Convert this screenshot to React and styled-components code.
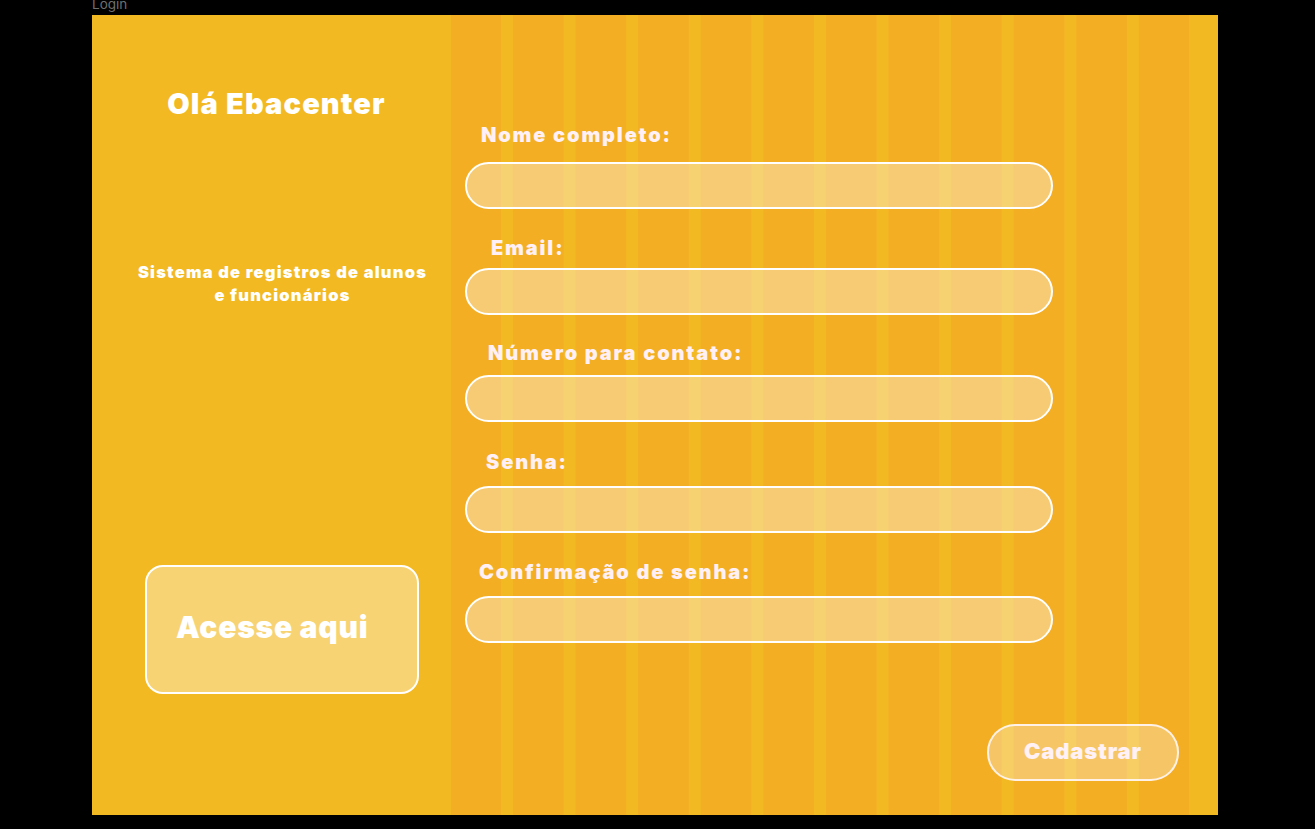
import React from 'react';
import styled, { createGlobalStyle } from 'styled-components';

const GlobalStyle = createGlobalStyle`
	html, body {
		margin: 0;
		padding: 0;
		background: #000000;
	}
	body {
		font-family: Inter, "Noto Sans", sans-serif;
		width: 1315px;
		height: 829px;
		overflow: hidden;
	}
`;

const fields = [
	{ label: 'Nome completo:', indent: 16, top: 108, gap: 15 },
	{ label: 'Email:', indent: 26, top: 27, gap: 8 },
	{ label: 'Número para contato:', indent: 23, top: 26, gap: 10 },
	{ label: 'Senha:', indent: 21, top: 28, gap: 12 },
	{ label: 'Confirmação de senha:', indent: 14, top: 27, gap: 12 },
];

const App = () => {
	return (
		<>
			<GlobalStyle />
			<Page>
				<FrameName>Login</FrameName>
				<Frame>
					<Welcome>
						<Title>Olá Ebacenter</Title>
						<Subtitle>
							Sistema de registros de alunos
							<br />e funcionários
						</Subtitle>
						<AccessButton>Acesse aqui</AccessButton>
					</Welcome>
					<FormArea>
						<Form>
							{fields.map((f) => (
								<Field key={f.label} $top={f.top}>
									<Label $indent={f.indent}>{f.label}</Label>
									<Input $gap={f.gap} />
								</Field>
							))}
						</Form>
						<Footer>
							<SubmitButton>Cadastrar</SubmitButton>
						</Footer>
					</FormArea>
				</Frame>
			</Page>
		</>
	);
};

const yellow = '#F3B922';
const orange = '#F3AE24';

const Page = styled.div`
	padding-left: 92px;
	display: flex;
	flex-direction: column;
`;

const FrameName = styled.div`
	height: 18px;
	margin-top: -3px;
	font-family: Inter, sans-serif;
	font-size: 13.5px;
	line-height: 15px;
	color: #6f6f6f;
	overflow: hidden;
`;

const Frame = styled.div`
	width: 1126px;
	height: 800px;
	display: flex;
	background: ${yellow};
`;

const Welcome = styled.div`
	width: 359px;
	display: flex;
	flex-direction: column;
	align-items: center;
	background: ${yellow};
`;

const Title = styled.h1`
	margin: 71px 0 0 10px;
	font-size: 29px;
	line-height: 36px;
	font-weight: 900;
	color: #ffffff;
	letter-spacing: 1.15px;
`;

const Subtitle = styled.p`
	margin: 139px 0 0 22px;
	font-size: 16.5px;
	line-height: 23px;
	font-weight: 900;
	color: #ffffff;
	text-align: center;
	letter-spacing: 1.2px;
`;

const AccessButton = styled.button`
	margin: 258px 0 0 21px;
	width: 274px;
	height: 129px;
	box-sizing: border-box;
	padding: 0 0 6px 29px;
	text-align: left;
	border: 2px solid #ffffff;
	border-radius: 18px;
	background: rgba(255, 255, 255, 0.37);
	font-family: Inter, sans-serif;
	font-size: 30px;
	font-weight: 900;
	color: #ffffff;
	letter-spacing: 0.76px;
`;

const FormArea = styled.div`
	flex: 1;
	display: flex;
	flex-direction: column;
	background:
		linear-gradient(to left, ${yellow} 29px, transparent 29px),
		linear-gradient(90deg, ${yellow} 0 12px, ${orange} 12px 100%);
	background-size: 100% 100%, 62.6px 100%;
	background-position: 0 0, 50px 0;
	background-repeat: no-repeat, repeat-x;
`;

const Form = styled.div`
	display: flex;
	flex-direction: column;
	padding-left: 14px;
`;

const Field = styled.div`
	margin-top: ${(p) => p.$top}px;
	display: flex;
	flex-direction: column;
`;

const Label = styled.label`
	padding-left: ${(p) => p.$indent}px;
	font-size: 20px;
	line-height: 24px;
	font-weight: 900;
	color: #fff0f6;
	letter-spacing: 1.85px;
`;

const Input = styled.input`
	margin-top: ${(p) => p.$gap}px;
	width: 588px;
	height: 47px;
	box-sizing: border-box;
	border: 2px solid #ffffff;
	border-radius: 24px;
	background: rgba(255, 255, 255, 0.36);
	outline: none;
`;

const Footer = styled.div`
	margin-top: auto;
	display: flex;
	justify-content: flex-end;
	padding: 0 39px 34px 0;
`;

const SubmitButton = styled.button`
	width: 192px;
	height: 57px;
	box-sizing: border-box;
	border: 2px solid rgba(255, 246, 246, 0.9);
	border-radius: 28px;
	background: rgba(255, 255, 255, 0.3);
	font-family: Inter, sans-serif;
	font-size: 22px;
	font-weight: 900;
	color: #fff1f6;
	letter-spacing: 0.85px;
	padding: 0 0 4px 0;
`;

export default App;
